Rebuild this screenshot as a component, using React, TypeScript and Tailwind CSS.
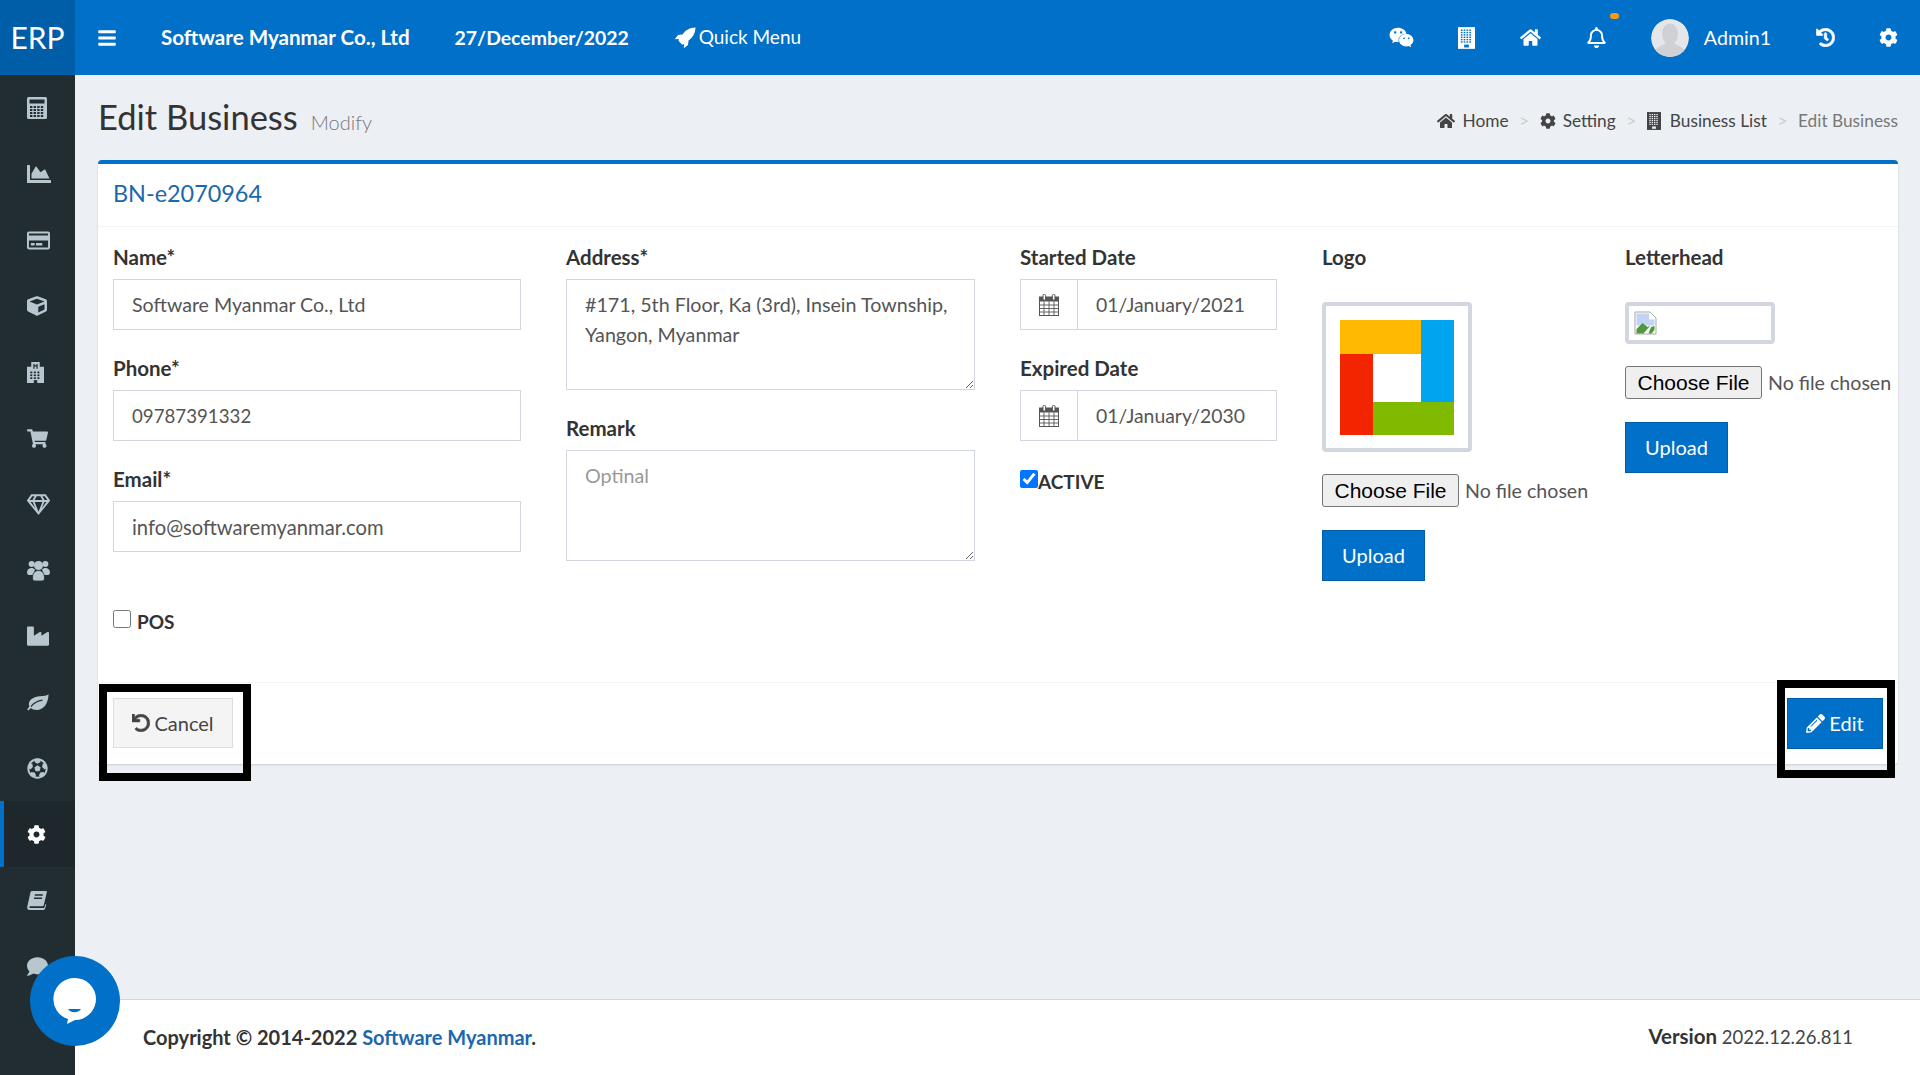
import React from "react";
import {
  FaBars, FaChartArea, FaCog, FaComment, FaCube, FaFutbol, FaHistory, FaHome,
  FaIndustry, FaPencilAlt, FaShoppingCart, FaUndo, FaWeixin,
  FaRegBell, FaRegCreditCard, FaRegGem,
} from "react-icons/fa";

const DARK = "#222d32";

function Calculator() {
  const keys = [];
  for (let r = 0; r < 4; r++) for (let c = 0; c < 4; c++) keys.push(<rect key={r + "-" + c} x={3 + c * 3.6} y={9 + r * 3} width="2.4" height="2" fill={DARK} />);
  return (
    <svg viewBox="0 0 20 22" className="h-[22px] w-[20px]">
      <rect width="20" height="22" rx="1.5" fill="currentColor" />
      <rect x="2.5" y="2.5" width="15" height="4" fill={DARK} />
      {keys}
    </svg>
  );
}
function Hospital() {
  const w = [];
  for (let r = 0; r < 3; r++) for (let c = 0; c < 3; c++) w.push(<rect key={r + "-" + c} x={3.8 + c * 4.2} y={10 + r * 3} width="2.4" height="1.8" fill={DARK} />);
  return (
    <svg viewBox="0 0 20 22" className="h-[21px] w-[17px]" preserveAspectRatio="none">
      <path d="M5 0h10v5h5v17H0V5h5Z" fill="currentColor" />
      <path d="M7.5 2h1.4v1.4h2.2V2h1.4v5h-1.4V4.8H8.9V7H7.5Z" fill={DARK} />
      {w}
      <rect x="8" y="19" width="4" height="3" fill={DARK} />
    </svg>
  );
}
function Leaf() {
  return (
    <svg viewBox="0 0 22 17" className="h-[17px] w-[22px]">
      <path d="M21.5 0C21.5 9 17 16 9.5 16 7 16 5 15 3.8 14L1.6 16.5.2 15.5 2.3 12.5C0 6 7 2.5 13 2.2 16.5 2 20 2 21.5 0Z" fill="currentColor" />
      <path d="M4 12.6C7 8.8 11 6.8 15.5 6.2" stroke={DARK} strokeWidth="1.2" fill="none" />
    </svg>
  );
}
function Book() {
  return (
    <svg viewBox="0 0 20 19" className="h-[19px] w-[20px]">
      <path d="M5.2 0H19.3c.5 0 .7.4.6.9L16.8 14c-.2.8-.8 1.3-1.6 1.3H3.2c-.8 0-1.2.9-.9 1.3.2.3.6.4 1 .4h13.2c.4 0 .7-.2.9-.6l.8-3.2 1 .3-1.1 4c-.2.9-.9 1.5-1.9 1.5H2.6C1 19 0 17.6.2 16.2L3.4 1.6C3.6.7 4.3 0 5.2 0Z" fill="currentColor" />
      <path d="M7.8 4h8M7 7.2h8" stroke={DARK} strokeWidth="1.4" />
    </svg>
  );
}
function Users() {
  return (
    <svg viewBox="0 0 23 21" className="h-[21px] w-[23px]">
      <circle cx="4.6" cy="4" r="3" fill="currentColor" />
      <circle cx="18.4" cy="4" r="3" fill="currentColor" />
      <path d="M0 12.5C0 9.5 2 8 4.5 8 6 8 7 8.5 8 9.5L6 15H2C.8 15 0 14 0 12.5ZM23 12.5C23 9.5 21 8 18.5 8 17 8 16 8.5 15 9.5L17 15H21C22.200 15 23 14 23 12.500Z" fill="currentColor" />
      <circle cx="11.500" cy="5.500" r="4.500" fill="currentColor" />
      <path d="M5.500 18C5.500 12.800 8 10.500 11.500 10.500S17.500 12.800 17.500 18C17.500 20 16.500 21 15 21H8C6.500 21 5.500 20 5.500 18Z" fill="currentColor" stroke={DARK} strokeWidth="0.8" />
    </svg>
  );
}
function Calendar() {
  return (
    <svg viewBox="0 0 20 22" className="h-[22px] w-[20px]" fill="none">
      <rect x="0.5" y="3" width="19" height="18.5" fill="#fff" stroke="#555" />
      <rect x="0.5" y="3" width="19" height="4.5" fill="#555" />
      <path d="M0.5 11h19M0.5 14.5h19M0.5 18h19M5 7.5v14M10 7.5v14M15 7.5v14" stroke="#555" strokeWidth="0.9" />
      <rect x="4" y="0.5" width="2.6" height="5.5" rx="1" fill="#fff" stroke="#555" />
      <rect x="13.4" y="0.5" width="2.6" height="5.5" rx="1" fill="#fff" stroke="#555" />
    </svg>
  );
}
function Building({ win, cls }: { win: string; cls: string }) {
  const w = [];
  for (let r = 0; r < 6; r++) for (let c = 0; c < 4; c++) w.push(<rect key={r + "-" + c} x={3 + c * 3} y={2.5 + r * 2.5} width="1.8" height="1.5" fill={win} />);
  return (
    <svg viewBox="0 0 18 23" className={cls}>
      <rect width="18" height="23" fill="currentColor" />
      {w}
      <rect x="6.5" y="18.5" width="5" height="3" fill={win} />
    </svg>
  );
}
function Rocket() {
  return (
    <svg viewBox="0 0 22 22" className="h-[22px] w-[22px]">
      <path d="M21.5 0.5C16 0.7 11.5 3 8.5 7.5L4 8 0.8 12.2l4-.3L4.6 14l3.4 3.4 2.1-.2-.3 4 4.2-3.2.5-4.5C19 10.5 21.3 6 21.5.5Z" fill="currentColor" />
    </svg>
  );
}

const iconStroke = { stroke: "currentColor", strokeWidth: 18 };

const sideIcons = [
  { n: <Calculator /> },
  { n: <FaChartArea className="text-[24px]" /> },
  { n: <FaRegCreditCard className="text-[23px]" /> },
  { n: <FaCube className="text-[20px]" /> },
  { n: <Hospital /> },
  { n: <FaShoppingCart className="text-[21px]" /> },
  { n: <FaRegGem className="text-[23px]" /> },
  { n: <Users /> },
  { n: <FaIndustry className="text-[22px]" /> },
  { n: <Leaf /> },
  { n: <FaFutbol className="text-[21px]" /> },
  { n: <FaCog className="text-[19px]" />, active: true },
  { n: <Book /> },
  { n: <FaComment className="text-[21px]" /> },
];

const inputCls =
  "block w-full h-[51px] border border-[#d2d6de] px-[18px] text-[#555] bg-white outline-none";
const labelCls = "block h-[26px] leading-[26px] mb-[9px] text-[20.5px] font-bold text-[#333]";
const areaCls =
  "block w-full h-[111px] border border-[#d2d6de] px-[18px] py-[10px] text-[19.7px] leading-[30px] text-[#555] bg-white outline-none placeholder:text-[#999]";
const uploadCls = "block w-[103px] h-[51px] pb-[2px] bg-[#0070c9] border border-[#005ea9] text-white text-[20px]";
const fileCls =
  "block w-[275px] text-[19.6px] text-[#555] file:mr-[6px] file:h-[33px] file:w-[137px] file:rounded-[3px] file:border file:border-[#767676] file:bg-[#efefef] file:text-[21px] file:text-black file:font-['Liberation_Sans',sans-serif]";

function DateField({ value }: { value: string }) {
  return (
    <div className="flex h-[51px] w-[257px] border border-[#d2d6de]">
      <div className="flex w-[57px] items-center justify-center border-r border-[#d2d6de]">
        <Calendar />
      </div>
      <input readOnly value={value} className="min-w-0 flex-1 pl-[18px] text-[19.4px] text-[#555] outline-none" />
    </div>
  );
}

export default function App() {
  return (
    <div className="relative flex h-[1075px] w-[1920px] flex-col overflow-hidden bg-[#ecf0f5] font-['Lato',sans-serif] text-[#333]">
      <header className="flex h-[75px] shrink-0 items-center bg-[#0070c9] text-white">
        <div className="flex h-full w-[75px] items-center justify-center bg-[#005ea9] text-[30px]">ERP</div>
        <FaBars className="ml-[22px] text-[20px]" />
        <span className="ml-[44px] text-[20.6px] font-bold">Software Myanmar Co., Ltd</span>
        <span className="ml-[45px] text-[19.4px] font-bold">27/December/2022</span>
        <span className="ml-[45px] flex items-center gap-[3px] text-[19px]">
          <Rocket />
          Quick Menu
        </span>
        <div className="ml-auto flex items-center pr-[22px]">
          <FaWeixin className="text-[25px]" />
          <Building win="#0070c9" cls="ml-[44px] h-[22px] w-[17px]" />
          <FaHome className="ml-[45px] text-[21px]" />
          <div className="relative ml-[45px]">
            <FaRegBell className="text-[21px]" />
            <span className="absolute -right-[12px] -top-[14px] h-[6px] w-[9px] rounded-full bg-[#f39c12]" />
          </div>
          <svg viewBox="0 0 38 38" className="ml-[44px] h-[38px] w-[38px] rounded-full">
            <circle cx="19" cy="19" r="19" fill="#e4e6e9" />
            <ellipse cx="19" cy="15" rx="8" ry="10.5" fill="#cfd1d4" />
            <path d="M4 32c3-5 9-6 11-8h8c2 2 8 3 11 8a19 19 0 0 1-30 0Z" fill="#cfd1d4" />
          </svg>
          <span className="ml-[15px] text-[19.6px]">Admin1</span>
          <FaHistory className="ml-[45px] text-[19px]" style={iconStroke} />
          <FaCog className="ml-[44px] text-[19px]" />
        </div>
      </header>

      <div className="flex min-h-0 flex-1">
        <aside className="w-[75px] shrink-0 bg-[#222d32]">
          {sideIcons.map(({ n, active }, i) => (
            <div
              key={i}
              className={
                active
                  ? "flex h-[66px] items-center border-l-[4px] border-[#0070c9] bg-[#1e282c] pl-[23px] text-white"
                  : "flex h-[66px] items-center pl-[27px] text-[#b8c7ce]"
              }
            >
              {n}
            </div>
          ))}
        </aside>

        <main className="flex min-w-0 flex-1 flex-col">
          <div className="flex-1 pl-[23px] pr-[22px]">
            <div className="flex h-[85px] items-center justify-between pt-[3px]">
              <div className="mb-[4px] flex items-baseline gap-[13px]">
                <h1 className="text-[34.5px] leading-[40px] text-[#333]">Edit Business</h1>
                <span className="text-[20px] font-light text-[#777]">Modify</span>
              </div>
              <nav className="mt-[3px] flex items-center text-[17.3px] text-[#444]">
                <FaHome className="mr-[8px] text-[18px]" />
                Home
                <span className="mx-[10.5px] text-[#ccc]">&gt;</span>
                <FaCog className="mr-[7px] text-[16px]" />
                Setting
                <span className="mx-[10.5px] text-[#ccc]">&gt;</span>
                <Building win="#ecf0f5" cls="mr-[9px] h-[20px] w-[14px]" />
                Business List
                <span className="mx-[10.5px] text-[#ccc]">&gt;</span>
                <span className="text-[#777]">Edit Business</span>
              </nav>
            </div>

            <section className="h-[604px] rounded-[4px] border-t-[4px] border-[#0070c9] bg-white shadow-[0_1px_2px_rgba(0,0,0,0.15)]">
              <div className="flex h-[63px] items-center border-b border-[#f4f4f4] pb-[3px] pl-[15px] text-[23.4px] text-[#1b68ad]">
                BN-e2070964
              </div>
              <div className="flex h-[456px] gap-[45px] border-b border-[#f4f4f4] pl-[15px] pt-[17px]">
                <div className="w-[408px] shrink-0">
                  <label className={labelCls}>Name*</label>
                  <input readOnly value="Software Myanmar Co., Ltd" className={inputCls + " text-[19.6px]"} />
                  <label className={labelCls + " mt-[25px]"}>Phone*</label>
                  <input readOnly value="09787391332" className={inputCls + " text-[18.7px]"} />
                  <label className={labelCls + " mt-[25px]"}>Email*</label>
                  <input readOnly value="info@softwaremyanmar.com" className={inputCls + " text-[20.2px]"} />
                  <label className="mt-[58px] flex items-start gap-[6px] text-[19px] font-bold leading-[24px]">
                    <input type="checkbox" className="h-[18px] w-[18px]" />
                    POS
                  </label>
                </div>
                <div className="w-[409px] shrink-0">
                  <label className={labelCls}>Address*</label>
                  <textarea
                    readOnly
                    className={areaCls}
                    value={"#171, 5th Floor, Ka (3rd), Insein Township, Yangon, Myanmar"}
                  />
                  <label className={labelCls + " mt-[25px]"}>Remark</label>
                  <textarea readOnly className={areaCls} placeholder="Optinal" />
                </div>
                <div className="w-[257px] shrink-0">
                  <label className={labelCls}>Started Date</label>
                  <DateField value="01/January/2021" />
                  <label className={labelCls + " mt-[25px]"}>Expired Date</label>
                  <DateField value="01/January/2030" />
                  <label className="mt-[29px] flex items-start text-[19px] font-bold leading-[24px]">
                    <input type="checkbox" defaultChecked className="h-[18px] w-[18px]" />
                    ACTIVE
                  </label>
                </div>
                <div className="w-[258px] shrink-0">
                  <label className={labelCls}>Logo</label>
                  <div className="mt-[32px] h-[150px] w-[150px] rounded-[4px] border-[4px] border-[#d2d6de] p-[14px]">
                    <svg viewBox="0 0 114 115" className="h-[115px] w-[114px]">
                      <rect x="0" y="0" width="81" height="34" fill="#ffb900" />
                      <rect x="81" y="0" width="33" height="82" fill="#00a4ef" />
                      <rect x="0" y="34" width="33" height="81" fill="#f22500" />
                      <rect x="33" y="82" width="81" height="33" fill="#7fba00" />
                    </svg>
                  </div>
                  <input type="file" className={fileCls + " mt-[22px]"} />
                  <button className={uploadCls + " mt-[23px]"}>Upload</button>
                </div>
                <div className="min-w-0 flex-1">
                  <label className={labelCls}>Letterhead</label>
                  <div className="mt-[32px] h-[42px] w-[150px] rounded-[4px] border-[4px] border-[#d2d6de] pl-[5px] pt-[5px]">
                    <svg viewBox="0 0 24 24" className="h-[24px] w-[24px]">
                      <path d="M1 1h15l6 6v16H1Z" fill="#fff" stroke="#a9a9a9" />
                      <path d="M2.5 2.5h12.5v6h5.5v6H2.5Z" fill="#c3d4f2" />
                      <path d="M2.5 22.5V18l6-6 5 4 3-1.5-7 8Z" fill="#4f9a3d" />
                      <path d="M17 16l3.5-1v4l-3 3.5h-3Z" fill="#4f9a3d" />
                    </svg>
                  </div>
                  <input type="file" className={fileCls + " mt-[22px]"} />
                  <button className={uploadCls + " mt-[23px]"}>Upload</button>
                </div>
              </div>
              <div className="flex items-start justify-between px-[15px] pt-[15px]">
                <button className="flex h-[50px] w-[120px] items-center justify-center gap-[4px] border border-[#ddd] bg-[#f4f4f4] text-[20px] text-[#444]">
                  <FaUndo className="text-[18px]" style={iconStroke} />
                  Cancel
                </button>
                <button className="flex h-[51px] w-[96px] items-center justify-center gap-[4px] border border-[#005ea9] bg-[#0070c9] pb-[1px] text-[20px] text-white">
                  <FaPencilAlt className="text-[19px]" />
                  Edit
                </button>
              </div>
            </section>
          </div>

          <footer className="flex h-[76px] shrink-0 items-center justify-between border-t border-[#d2d6de] bg-white pb-[2px] pl-[68px] pr-[67px] text-[#444]">
            <div className="text-[20px] font-bold text-[#333]">
              Copyright © 2014-2022 <span className="text-[#1b68ad]">Software Myanmar</span>.
            </div>
            <div className="text-[18.5px]">
              <b className="text-[20.5px] text-[#333]">Version</b> 2022.12.26.811
            </div>
          </footer>
        </main>
      </div>

      <div className="absolute left-[30px] top-[956px] flex h-[90px] w-[90px] items-center justify-center rounded-full bg-[#0070c9]">
        <svg viewBox="0 0 44 48" className="h-[48px] w-[44px]">
          <path d="M22 1a21 21 0 0 1 0 42l-8 4 1-5A21 21 0 0 1 22 1Z" fill="#fff" />
          <path d="M15 32h13a7 5 0 0 1-13 0Z" fill="#0070c9" />
        </svg>
      </div>

      <div className="pointer-events-none absolute left-[99px] top-[684px] h-[97px] w-[152px] border-[8px] border-black" />
      <div className="pointer-events-none absolute left-[1777px] top-[680px] h-[98px] w-[118px] border-[8px] border-black" />
    </div>
  );
}
